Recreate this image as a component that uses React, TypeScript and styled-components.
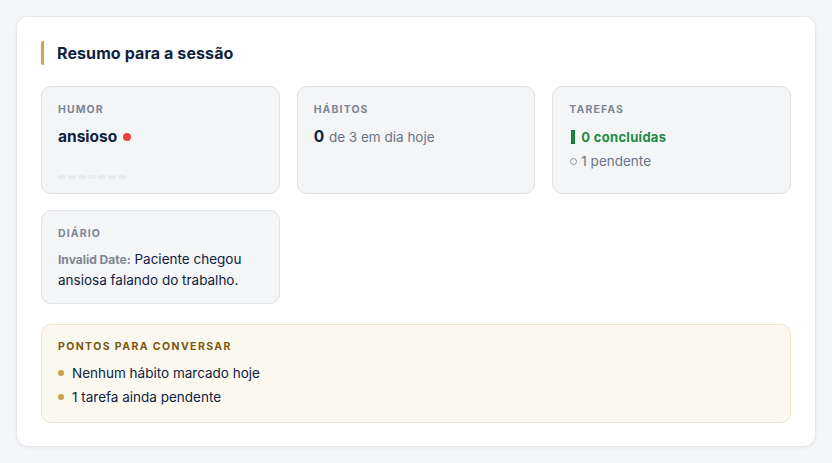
import React from 'react';
import styled, { createGlobalStyle } from 'styled-components';

const GlobalStyle = createGlobalStyle`
  html, body {
    margin: 0;
    padding: 0;
    background: #f4f5f7;
    font-family: Inter, "Noto Sans", "Liberation Sans", sans-serif;
    color: #0f2340;
  }
  * { box-sizing: border-box; }
`;

const points = ['Nenhum hábito marcado hoje', '1 tarefa ainda pendente'];

const App = () => (
  <Page>
    <GlobalStyle />
    <Summary>
      <Heading>Resumo para a sessão</Heading>
      <Grid>
        <Card>
          <Label>Humor</Label>
          <Mood>
            ansioso <Dot />
          </Mood>
          <Dashes>
            {Array.from({ length: 7 }).map((_, i) => (
              <Dash key={i} />
            ))}
          </Dashes>
        </Card>
        <Card>
          <Label>Hábitos</Label>
          <Habits>
            <strong>0</strong> de 3 em dia hoje
          </Habits>
        </Card>
        <Card>
          <Label>Tarefas</Label>
          <Done>
            <DoneMark /> 0 concluídas
          </Done>
          <Pending>
            <Ring /> 1 pendente
          </Pending>
        </Card>
        <Card $short>
          <Label>Diário</Label>
          <Diary>
            <DateTag>Invalid Date:</DateTag> Paciente chegou ansiosa falando do trabalho.
          </Diary>
        </Card>
      </Grid>
      <Talk>
        <TalkLabel>Pontos para conversar</TalkLabel>
        <TalkList>
          {points.map(p => (
            <TalkItem key={p}>{p}</TalkItem>
          ))}
        </TalkList>
      </Talk>
    </Summary>
  </Page>
);

const Page = styled.div`
  padding: 16px;
`;

const Summary = styled.section`
  background: #ffffff;
  border: 1px solid #e6e8ec;
  border-radius: 12px;
  box-shadow: 0 1px 3px rgba(15, 35, 64, 0.06);
  padding: 24px 24px 23px;
`;

const Heading = styled.h2`
  margin: 0 0 21px;
  height: 24px;
  line-height: 24px;
  font-size: 16px;
  font-weight: 700;
  letter-spacing: 0.1px;
  color: #0f2340;
  border-left: 3px solid #d0a54b;
  border-radius: 2px;
  padding-left: 13px;
`;

const Grid = styled.div`
  display: grid;
  grid-template-columns: repeat(3, 1fr);
  gap: 16px 17px;
  align-items: start;
`;

const Card = styled.div<{ $short?: boolean }>`
  background: #f4f5f7;
  border: 1px solid #dfe2e7;
  border-radius: 10px;
  padding: 16px 16px 13px;
  min-height: ${p => (p.$short ? 94 : 108)}px;
`;

const Label = styled.div`
  font-size: 10.5px;
  line-height: 14px;
  font-weight: 700;
  letter-spacing: 1.1px;
  text-transform: uppercase;
  color: #7d8595;
  margin-bottom: 10px;
`;

const Mood = styled.div`
  display: flex;
  align-items: center;
  gap: 6px;
  font-size: 15.5px;
  line-height: 20px;
  font-weight: 700;
  color: #0f2340;
`;

const Dot = styled.span`
  width: 8px;
  height: 8px;
  border-radius: 50%;
  background: #ef4444;
`;

const Dashes = styled.div`
  display: flex;
  gap: 2px;
  margin-top: 28px;
`;

const Dash = styled.span`
  width: 8px;
  height: 4px;
  border-radius: 2px;
  background: #e8eaee;
`;

const Habits = styled.div`
  font-size: 13.5px;
  line-height: 20px;
  color: #6b7484;

  strong {
    font-size: 15.5px;
    font-weight: 700;
    margin-right: 1px;
    color: #0f2340;
  }
`;

const Done = styled.div`
  display: flex;
  align-items: center;
  gap: 6px;
  padding-left: 2px;
  font-size: 13px;
  line-height: 20px;
  font-weight: 700;
  letter-spacing: 0.3px;
  color: #1e8a43;
`;

const DoneMark = styled.span`
  width: 4px;
  height: 14px;
  background: #1e8a43;
  border: 1px solid #157034;
`;

const Pending = styled.div`
  display: flex;
  align-items: center;
  gap: 4px;
  margin-top: 4px;
  padding-left: 1px;
  font-size: 13.5px;
  line-height: 20px;
  color: #6b7484;
`;

const Ring = styled.span`
  width: 7px;
  height: 7px;
  border-radius: 50%;
  border: 1px solid #8a92a0;
`;

const Diary = styled.div`
  margin-top: -2px;
  font-size: 13.5px;
  line-height: 20px;
  color: #0f2340;
`;

const DateTag = styled.span`
  font-size: 12px;
  font-weight: 700;
  color: #7d8595;
`;

const Talk = styled.div`
  margin-top: 20px;
  background: #fbf8f0;
  border: 1px solid #f0e5c6;
  border-radius: 10px;
  padding: 15px 16px 13px;
`;

const TalkLabel = styled.div`
  font-size: 10.5px;
  line-height: 14px;
  font-weight: 700;
  letter-spacing: 1.4px;
  text-transform: uppercase;
  color: #7a5810;
  margin-bottom: 7px;
`;

const TalkList = styled.ul`
  list-style: none;
  margin: 0;
  padding: 0;
`;

const TalkItem = styled.li`
  display: flex;
  align-items: center;
  gap: 8px;
  font-size: 13.5px;
  line-height: 24px;
  color: #0f2340;

  &::before {
    content: '';
    width: 6px;
    height: 6px;
    border-radius: 50%;
    background: #c9a14a;
  }
`;

export default App;
